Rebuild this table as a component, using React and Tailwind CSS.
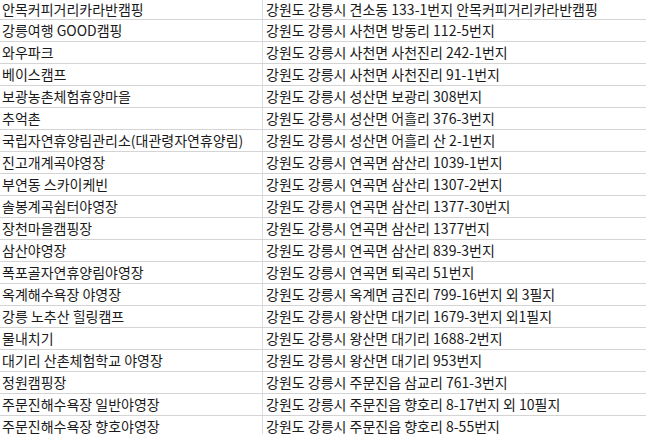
const rows = [
  ["안목커피거리카라반캠핑", "강원도 강릉시 견소동 133-1번지 안목커피거리카라반캠핑"],
  ["강릉여행 GOOD캠핑", "강원도 강릉시 사천면 방동리 112-5번지"],
  ["와우파크", "강원도 강릉시 사천면 사천진리 242-1번지"],
  ["베이스캠프", "강원도 강릉시 사천면 사천진리 91-1번지"],
  ["보광농촌체험휴양마을", "강원도 강릉시 성산면 보광리 308번지"],
  ["추억촌", "강원도 강릉시 성산면 어흘리 376-3번지"],
  ["국립자연휴양림관리소(대관령자연휴양림)", "강원도 강릉시 성산면 어흘리 산 2-1번지"],
  ["진고개계곡야영장", "강원도 강릉시 연곡면 삼산리 1039-1번지"],
  ["부연동 스카이케빈", "강원도 강릉시 연곡면 삼산리 1307-2번지"],
  ["솔봉계곡쉼터야영장", "강원도 강릉시 연곡면 삼산리 1377-30번지"],
  ["장천마을캠핑장", "강원도 강릉시 연곡면 삼산리 1377번지"],
  ["삼산야영장", "강원도 강릉시 연곡면 삼산리 839-3번지"],
  ["폭포골자연휴양림야영장", "강원도 강릉시 연곡면 퇴곡리 51번지"],
  ["옥계해수욕장 야영장", "강원도 강릉시 옥계면 금진리 799-16번지 외 3필지"],
  ["강릉 노추산 힐링캠프", "강원도 강릉시 왕산면 대기리 1679-3번지 외1필지"],
  ["물내치기", "강원도 강릉시 왕산면 대기리 1688-2번지"],
  ["대기리 산촌체험학교 야영장", "강원도 강릉시 왕산면 대기리 953번지"],
  ["정원캠핑장", "강원도 강릉시 주문진읍 삼교리 761-3번지"],
  ["주문진해수욕장 일반야영장", "강원도 강릉시 주문진읍 향호리 8-17번지 외 10필지"],
  ["주문진해수욕장 향호야영장", "강원도 강릉시 주문진읍 향호리 8-55번지"],
];

export default function App() {
  return (
    <div className="w-[646px] h-[434px] overflow-hidden bg-white">
      <div
        className="text-[14px] text-[#1a1a1a]"
        style={{ fontFamily: '"Malgun Gothic", "Noto Sans CJK KR", sans-serif' }}
      >
        {rows.map(([name, addr], i) => (
          <div
            key={i}
            className={
              i === 0
                ? "grid grid-cols-[263px_1fr] h-[20px] border-b border-[#d4d4d4]"
                : "grid grid-cols-[263px_1fr] h-[22px] border-b border-[#d4d4d4]"
            }
          >
            <div className="border-r border-[#d9dde3] pl-[2px] pb-[2px] flex items-center whitespace-nowrap overflow-hidden leading-none">
              {name}
            </div>
            <div className="pl-[3px] pb-[2px] flex items-center whitespace-nowrap overflow-hidden leading-none">
              {addr}
            </div>
          </div>
        ))}
      </div>
    </div>
  );
}
